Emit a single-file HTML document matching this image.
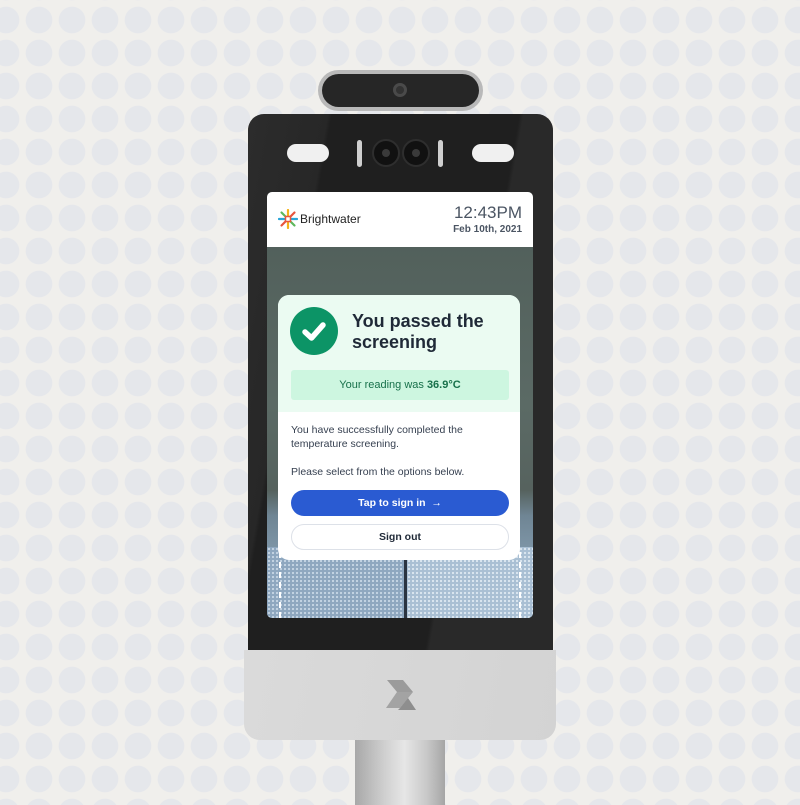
<!DOCTYPE html>
<html><head><style>
*{margin:0;padding:0;box-sizing:border-box}
body{width:800px;height:800px;overflow:hidden;position:relative;font-family:"Liberation Sans",sans-serif;
background-color:#f0efec;
background-image:radial-gradient(circle,#e5e7eb 13px,transparent 13.6px);
background-size:33px 33px;background-position:-10.5px 3.5px}
.a{position:absolute}
</style></head><body>
<!-- pole -->
<div class="a" style="left:355px;top:735px;width:90px;height:70px;background:linear-gradient(90deg,#a8a8a8,#d2d2d2 35%,#e6e6e6 55%,#c8c8c8 80%,#a5a5a5)"></div>
<!-- bottom panel -->
<div class="a" style="left:244px;top:650px;width:312px;height:90px;border-radius:0 0 16px 16px;background:linear-gradient(100deg,#dadada 0%,#d6d6d6 60%,#d3d3d3 100%)"></div>
<svg class="a" style="left:384px;top:678px" width="34" height="34" viewBox="0 0 34 34">
<polygon points="3,2 19,2 29,14 13,14" fill="#9b9b9b"/>
<polygon points="13,14 29,14 16,30 2,30 " fill="#a3a3a3"/>
<polygon points="16,30 24,20 32,32 14,32" fill="#8e8e8e"/>
</svg>
<!-- camera bar -->
<div class="a" style="left:318px;top:70px;width:165px;height:41px;border-radius:21px;background:#b9b9b9"></div>
<div class="a" style="left:322px;top:74px;width:157px;height:33px;border-radius:17px;background:#262626"></div>
<div class="a" style="left:393px;top:83px;width:14px;height:14px;border-radius:50%;background:#4a4a4a"></div>
<div class="a" style="left:396px;top:86px;width:8px;height:8px;border-radius:50%;background:#333"></div>
<!-- dark body -->
<div class="a" style="left:248px;top:114px;width:305px;height:536px;border-radius:16px 16px 0 0;background:linear-gradient(100deg,#2c2c2c 0%,#272727 20%,#1f1f1f 21%,#1f1f1f 68%,#292929 69%)"></div>
<div class="a" style="left:287px;top:144px;width:42px;height:18px;border-radius:9px;background:#f0f0f0"></div>
<div class="a" style="left:472px;top:144px;width:42px;height:18px;border-radius:9px;background:#f0f0f0"></div>
<div class="a" style="left:357px;top:140px;width:5px;height:27px;border-radius:3px;background:#cfcfcf"></div>
<div class="a" style="left:438px;top:140px;width:5px;height:27px;border-radius:3px;background:#cfcfcf"></div>
<div class="a" style="left:372px;top:139px;width:28px;height:28px;border-radius:50%;background:#111;border:2px solid #2e2e2e"></div>
<div class="a" style="left:382px;top:149px;width:8px;height:8px;border-radius:50%;background:#3a3a3a"></div>
<div class="a" style="left:402px;top:139px;width:28px;height:28px;border-radius:50%;background:#111;border:2px solid #2e2e2e"></div>
<div class="a" style="left:412px;top:149px;width:8px;height:8px;border-radius:50%;background:#3a3a3a"></div>
<!-- screen -->
<div class="a" style="left:267px;top:192px;width:266px;height:426px;border-radius:5px;overflow:hidden;background:linear-gradient(180deg,#4f5d58 0%,#5b6a65 50%,#56625e 70%,#6f8594 76%,#9cb6cc 100%)">
 <div class="a" style="left:0;top:0;width:266px;height:55px;background:#fff"></div>
 <div class="a" style="left:0;top:355px;width:138px;height:75px;background:#8ea7bf;background-image:radial-gradient(circle,#c4d4e3 1px,transparent 1.3px);background-size:4px 4px"></div>
 <div class="a" style="left:140px;top:355px;width:126px;height:75px;background:#a9bfd3;background-image:radial-gradient(circle,#dbe6ef 1px,transparent 1.3px);background-size:4px 4px"></div>
 <div class="a" style="left:137px;top:355px;width:3px;height:75px;background:#2b3440"></div>
 <div class="a" style="left:12px;top:360px;width:2px;height:66px;border-left:2px dashed #fff"></div>
 <div class="a" style="left:252px;top:360px;width:2px;height:66px;border-left:2px dashed #fff"></div>
</div>
<svg class="a" style="left:278px;top:209px" width="20" height="20" viewBox="0 0 20 20">
<g stroke-width="2.2" stroke-linecap="round">
<line x1="10" y1="1" x2="10" y2="7" stroke="#f4b21b"/><line x1="10" y1="13" x2="10" y2="19" stroke="#f4b21b"/>
<line x1="1" y1="10" x2="7" y2="10" stroke="#2aa5d8"/><line x1="13" y1="10" x2="19" y2="10" stroke="#2aa5d8"/>
<line x1="3.5" y1="3.5" x2="7.5" y2="7.5" stroke="#5cb85c"/><line x1="12.5" y1="12.5" x2="16.5" y2="16.5" stroke="#5cb85c"/>
<line x1="16.5" y1="3.5" x2="12.5" y2="7.5" stroke="#e8543d"/><line x1="7.5" y1="12.5" x2="3.5" y2="16.5" stroke="#e8543d"/>
</g><rect x="7.5" y="7.5" width="5" height="5" fill="none" stroke="#e8543d" stroke-width="1.5"/></svg>
<div class="a" style="left:300px;top:212px;font-size:12px;color:#222">Brightwater</div>
<div class="a" style="left:440px;top:203px;width:82px;text-align:right;font-size:17px;color:#4b5563">12:43PM</div>
<div class="a" style="left:430px;top:224px;width:92px;text-align:right;font-size:10px;font-weight:bold;color:#4b5563">Feb 10th, 2021</div>
<!-- card -->
<div class="a" style="left:278px;top:295px;width:242px;height:265px;border-radius:11px;overflow:hidden;background:#fff">
 <div class="a" style="left:0;top:0;width:242px;height:117px;background:#ebfbf2"></div>
 <div class="a" style="left:12px;top:12px;width:48px;height:48px;border-radius:50%;background:#0c9466"></div>
 <svg class="a" style="left:12px;top:12px" width="48" height="48" viewBox="0 0 48 48"><path d="M15 25 L21.5 31 L33 18" fill="none" stroke="#fff" stroke-width="5.5" stroke-linecap="round" stroke-linejoin="round"/></svg>
 <div class="a" style="left:74px;top:16px;font-size:18px;font-weight:bold;line-height:21px;color:#1f2937">You passed the<br>screening</div>
 <div class="a" style="left:13px;top:75px;width:218px;height:30px;border-radius:3px;background:#cdf6e0;text-align:center;line-height:30px;font-size:11px;color:#17704a">Your reading was <b>36.9°C</b></div>
 <div class="a" style="left:13px;top:128px;font-size:10.5px;line-height:14px;color:#374151">You have successfully completed the<br>temperature screening.<br><br>Please select from the options below.</div>
 <div class="a" style="left:13px;top:195px;width:218px;height:26px;border-radius:13px;background:#2a5bd2;color:#fff;text-align:center;line-height:26px;font-size:10.5px;font-weight:bold">Tap to sign in &nbsp;→</div>
 <div class="a" style="left:13px;top:229px;width:218px;height:26px;border-radius:13px;border:1px solid #dde1e8;color:#1f2937;text-align:center;line-height:24px;font-size:10.5px;font-weight:bold">Sign out</div>
</div>
</body></html>
